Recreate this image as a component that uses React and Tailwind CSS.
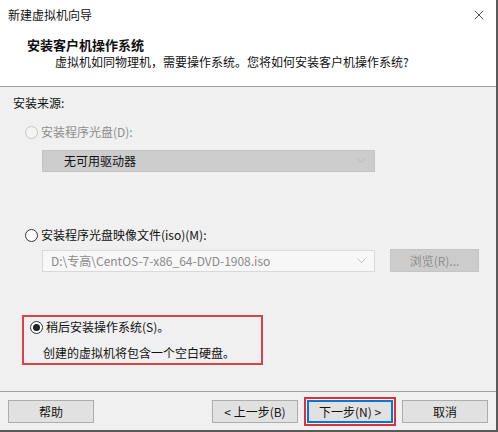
import { X } from 'lucide-react';

const FONT = "font-['Microsoft_YaHei','Noto_Sans_CJK_SC',sans-serif]";

function Radio({ state }) {
  if (state === 'disabled') {
    return <span className="w-[13px] h-[13px] rounded-full border border-[#c6c6c6] bg-[#f4f4f4] flex-shrink-0" />;
  }
  return (
    <span className="w-[13px] h-[13px] rounded-full border border-[#333] bg-white flex items-center justify-center flex-shrink-0">
      {state === 'checked' && <span className="w-[7px] h-[7px] rounded-full bg-[#222]" />}
    </span>
  );
}

function Chevron({ color = '#b8b8b8' }) {
  return (
    <svg width="9" height="6" viewBox="0 0 9 6" fill="none" stroke={color} strokeWidth="1">
      <path d="M0.5 0.5 4.5 4.5 8.5 0.5" />
    </svg>
  );
}

function Button({ children, primary }) {
  return (
    <button
      className={`h-[23px] w-[86px] text-[12px] leading-none text-[#111] bg-[#e1e1e1] ${
        primary
          ? 'border-2 border-[#0078d7] outline-2 outline-[#e0303a] outline-offset-[1px]'
          : 'border border-[#adadad]'
      }`}
    >
      {children}
    </button>
  );
}

export default function App() {
  return (
    <div className={`w-[498px] h-[432px] flex flex-col bg-[#f0f0f0] border-r-2 border-b-2 border-[#5a5a5a] text-[12px] text-[#111] ${FONT}`}>
      {/* Title bar */}
      <div className="h-[30px] bg-white flex items-center justify-between pl-[8px] pr-[9px]">
        <span className="leading-[16px]">新建虚拟机向导</span>
        <X size={16} strokeWidth={1.2} className="text-[#222]" />
      </div>

      {/* Header */}
      <div className="h-[57px] bg-white border-b border-[#a0a0a0] pt-[7px] pl-[27px]">
        <p className="text-[13px] font-bold leading-[16px]">安装客户机操作系统</p>
        <p className="mt-px pl-[28px] leading-[16px]">虚拟机如同物理机，需要操作系统。您将如何安装客户机操作系统?</p>
      </div>

      {/* Body */}
      <div className="flex-1 pt-[8px] pl-[13px]">
        <p className="leading-[16px]">安装来源:</p>

        <div className="mt-[13px] ml-[12px] flex items-center gap-[3px] text-[#8d8d8d] leading-[16px]">
          <Radio state="disabled" />
          <span>安装程序光盘(D):</span>
        </div>
        <div className="mt-[10px] ml-[29px] w-[333px] h-[22px] bg-[#cccccc] border border-[#c4c4c4] flex items-center justify-between pl-[21px] pr-[8px]">
          <span className="text-[#111]">无可用驱动器</span>
          <Chevron />
        </div>

        <div className="mt-[55px] ml-[12px] flex items-center gap-[3px] leading-[16px]">
          <Radio state="off" />
          <span>安装程序光盘映像文件(iso)(M):</span>
        </div>
        <div className="mt-[6px] ml-[29px] flex items-center gap-[15px]">
          <div className="w-[333px] h-[22px] bg-[#f7f7f7] border border-[#d9d9d9] flex items-center justify-between pl-[8px] pr-[8px]">
            <span className="text-[#8a8a8a]">D:\专高\CentOS-7-x86_64-DVD-1908.iso</span>
            <Chevron color="#c0c0c0" />
          </div>
          <div className="w-[89px] h-[23px] bg-[#cccccc] border border-[#c4c4c4] flex items-center justify-center text-[#8d8d8d]">
            浏览(R)...
          </div>
        </div>

        <div className="mt-[43px] ml-[9px] w-[241px] h-[50px] border-2 border-[#d9434b] pl-[6px] pt-[2px]">
          <div className="flex items-center gap-[3px] leading-[16px]">
            <Radio state="checked" />
            <span>稍后安装操作系统(S)。</span>
          </div>
          <p className="mt-[10px] pl-[13px] leading-[16px]">创建的虚拟机将包含一个空白硬盘。</p>
        </div>
      </div>

      {/* Footer */}
      <div className="h-[39px] border-t border-[#a0a0a0] pt-[8px] px-[8px] flex items-start">
        <Button>帮助</Button>
        <div className="flex-1" />
        <div className="flex gap-[9px]">
          <Button>&lt; 上一步(B)</Button>
          <Button primary>下一步(N) &gt;</Button>
          <Button>取消</Button>
        </div>
      </div>
    </div>
  );
}
